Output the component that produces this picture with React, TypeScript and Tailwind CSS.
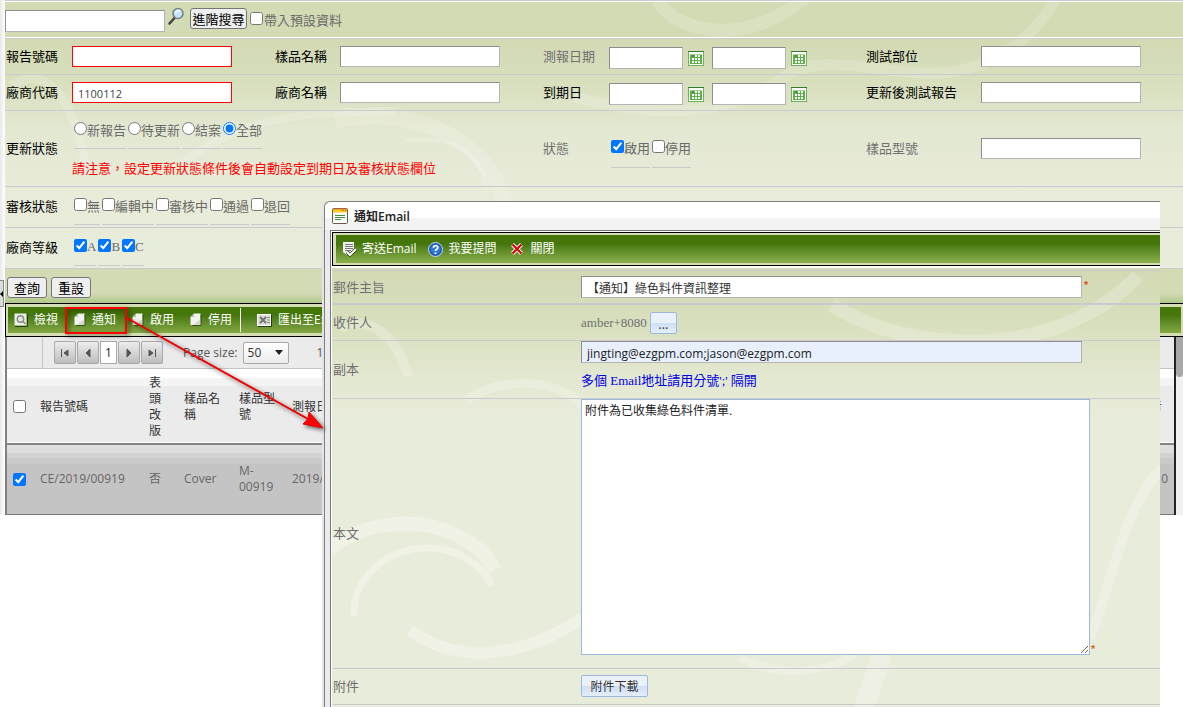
import React, { useState } from 'react';
import type { ReactNode } from 'react';

const uiFont = "font-['Open_Sans','Noto_Sans_CJK_TC',sans-serif]";
const serifFont = "font-['Liberation_Serif','Noto_Sans_CJK_TC',serif]";
const fieldBorder = 'border border-t-[#8e8e8e] border-l-[#8e8e8e] border-r-[#b5b5b5] border-b-[#b5b5b5]';

function TextField({ label, required = false, value = '' }: { label: string; required?: boolean; value?: string }) {
  const [text, setText] = useState(value);
  return (
    <input
      type="text"
      aria-label={label}
      value={text}
      onChange={(e) => setText(e.target.value)}
      className={`h-[21px] w-40 bg-white px-[5px] pt-[2px] text-[11px] text-[#444] ${uiFont} ${required ? 'border border-[#f00]' : fieldBorder}`}
    />
  );
}

function CalendarIcon() {
  return (
    <svg width="16" height="15" viewBox="0 0 16 15" shapeRendering="crispEdges">
      <rect width="16" height="15" fill="#6db35c" />
      <rect width="16" height="1" fill="#2f7d2a" />
      <rect x="1" y="1" width="14" height="13" fill="#fff" />
      <rect x="2" y="3" width="12" height="10" fill="#5fae4c" />
      <rect x="2" y="3" width="12" height="1" fill="#a5d690" />
      <rect x="4" y="4" width="2" height="2" fill="#3f8f35" />
      <g fill="#fff">
        <rect x="7" y="4" width="2" height="2" />
        <rect x="10" y="4" width="2" height="2" />
        <rect x="4" y="7" width="2" height="2" />
        <rect x="7" y="7" width="2" height="2" />
        <rect x="10" y="7" width="2" height="2" />
        <rect x="4" y="10" width="2" height="2" />
        <rect x="7" y="10" width="2" height="2" />
        <rect x="10" y="10" width="2" height="2" />
      </g>
    </svg>
  );
}

function DateRange({ label }: { label: string }) {
  return (
    <div className="flex items-center gap-[5px] pt-[3px]">
      <input type="text" aria-label={`${label} 起`} className={`h-[22px] w-[74px] bg-white px-1 text-[11px] ${fieldBorder}`} />
      <button type="button" aria-label={`${label} 起 日曆`} className="mr-[3px]">
        <CalendarIcon />
      </button>
      <input type="text" aria-label={`${label} 迄`} className={`h-[22px] w-[74px] bg-white px-1 text-[11px] ${fieldBorder}`} />
      <button type="button" aria-label={`${label} 迄 日曆`}>
        <CalendarIcon />
      </button>
    </div>
  );
}

function Choices({ type, name, options, checked }: { type: 'radio' | 'checkbox'; name: string; options: string[]; checked: string[] }) {
  return (
    <div className="flex gap-[2px] pl-[2px]">
      {options.map((option) => (
        <label key={option} className="flex h-[38px] items-center border-b border-[#c9c9cf] text-[#6a6a6a]">
          <input type={type} name={name} defaultChecked={checked.includes(option)} className="mb-[3px] h-[13px] w-[13px]" />
          {option}
        </label>
      ))}
    </div>
  );
}

function Row({ children, height }: { children: ReactNode; height: string }) {
  return (
    <div className={`grid grid-cols-[66px_203px_65px_203px_66px_257px_115px_1fr] items-center border-b border-[#c9c9cf] pl-px ${height}`}>
      {children}
    </div>
  );
}

function Label({ children, muted = false }: { children: ReactNode; muted?: boolean }) {
  return <span className={`pb-[2px] ${muted ? 'text-[#707070]' : 'text-black'}`}>{children}</span>;
}

function PageSwirls() {
  return (
    <svg className="pointer-events-none absolute inset-0 h-full w-full" fill="none" stroke="#fff" strokeOpacity="0.17">
      <path d="M652 0 C675 34 745 46 803 -6" strokeWidth="13" />
      <path d="M1052 -4 C1025 45 975 76 915 72 S810 52 775 78 S680 125 570 96" strokeWidth="11" />
      <path d="M330 120 C400 104 480 132 500 202" strokeWidth="16" />
      <path d="M400 140 C450 134 476 150 482 190" strokeWidth="4" />
      <path d="M6 85 C34 66 66 80 82 170" strokeWidth="9" />
      <path d="M170 168 C240 110 310 112 390 110" strokeWidth="8" />
    </svg>
  );
}

function WindowSwirls() {
  return (
    <svg className="pointer-events-none absolute inset-0 h-full w-full" fill="none" stroke="#fff" strokeOpacity="0.22">
      <path d="M500 37 C580 88 725 92 806 8" strokeWidth="14" />
      <path d="M-2 281 C30 254 80 250 112 262 C140 272 155 286 163 302" strokeWidth="14" strokeOpacity="0.3" />
      <path d="M22 348 C20 310 55 280 95 280 C130 280 152 300 160 318" strokeWidth="7" strokeOpacity="0.3" />
      <path d="M78 362 C120 394 185 394 250 350" strokeWidth="12" strokeOpacity="0.3" />
      <path d="M134 132 C180 104 235 112 262 150" strokeWidth="9" />
      <path d="M8 60 C36 46 64 66 76 108" strokeWidth="10" />
      <path d="M408 390 C442 408 490 408 522 386" strokeWidth="8" />
      <path d="M550 386 C542 410 538 424 530 445" strokeWidth="20" />
      <path d="M758 370 C776 330 790 240 830 200" strokeWidth="10" />
    </svg>
  );
}

function DocIcon() {
  return (
    <svg width="12" height="14" viewBox="0 0 12 14">
      <path d="M4 0.5 H10.5 V12 H0.5 V4 Z" fill="#f3f3f0" />
      <path d="M4 0.5 V4 H0.5 Z" fill="#b9bfae" />
      <path d="M3 12 H10.5 V6 Z" fill="#d4d6cf" />
      <path d="M11 2 V12.5 H2" fill="none" stroke="#24400a" strokeOpacity="0.7" />
    </svg>
  );
}

function ViewIcon() {
  return (
    <svg width="14" height="14" viewBox="0 0 14 14">
      <rect x="0.5" y="0.5" width="12" height="12" fill="#eceee9" />
      <path d="M13.5 1 V13.5 H1" fill="none" stroke="#24400a" />
      <circle cx="6.5" cy="6" r="3.2" fill="#e4e6e2" stroke="#878b83" strokeWidth="1.4" />
      <path d="M9 8.5 L11.5 11" stroke="#878b83" strokeWidth="1.6" />
    </svg>
  );
}

function ExportIcon() {
  return (
    <svg width="15" height="13" viewBox="0 0 15 13">
      <rect x="0.5" y="0.5" width="13" height="11" fill="#dcdedb" stroke="#fff" />
      <path d="M3 3 L9 9 M9 3 L3 9" stroke="#70756b" strokeWidth="2" />
      <path d="M10 3.5 H13 M10 6 H13 M10 8.5 H13" stroke="#8d9289" />
      <path d="M1 12.5 H14.5 V1" fill="none" stroke="#24400a" />
    </svg>
  );
}

function PagerButton({ label, path }: { label: string; path: ReactNode }) {
  return (
    <button type="button" aria-label={label} className="flex h-[23px] w-[22px] items-center justify-center rounded-[2px] border border-[#a9a9a9] bg-linear-to-b from-[#ededed] to-[#bdbdbd]">
      <svg width="12" height="12" viewBox="0 0 12 12" fill="#555" stroke="#555">
        {path}
      </svg>
    </button>
  );
}

function ResultGrid() {
  const head = 'px-[7px] pt-[2px] text-left align-middle font-normal';
  return (
    <table className={`w-full table-fixed border-b border-[#7a7a7a] text-xs leading-4 ${uiFont}`}>
      <colgroup>
        <col className="w-[26px]" />
        <col className="w-[109px]" />
        <col className="w-[35px]" />
        <col className="w-[55px]" />
        <col className="w-[53px]" />
        <col className="w-[80px]" />
        <col />
      </colgroup>
      <thead>
        <tr className="h-[75px] border-b-2 border-[#858585] bg-[linear-gradient(#fff_0_9px,#f4f4f4_9px_17px,#ebebeb_17px)] text-[#333]">
          <th className="pl-[6px] text-left align-middle">
            <input type="checkbox" aria-label="全選" className="block h-[13px] w-[13px]" />
          </th>
          <th className={head}>報告號碼</th>
          <th className={head}>表頭改版</th>
          <th className={head}>樣品名稱</th>
          <th className={head}>樣品型號</th>
          <th className={head}>測報日期</th>
          <th className="pr-3 text-right font-normal">告</th>
        </tr>
      </thead>
      <tbody>
        <tr className="h-[70px] bg-[linear-gradient(#dedede_0_9px,#d2d2d2_9px_14px,#cacaca_14px_20px,#c4c4c4_20px)] text-[#666]">
          <td className="pl-[6px]">
            <input type="checkbox" aria-label="選取 CE/2019/00919" defaultChecked className="block h-[13px] w-[13px]" />
          </td>
          <td className="px-[7px]">CE/2019/00919</td>
          <td className="px-[7px]">否</td>
          <td className="px-[7px]">Cover</td>
          <td className="px-[7px]">M-00919</td>
          <td className="px-[7px]">2019/</td>
          <td className="pr-[6px] text-right">0</td>
        </tr>
      </tbody>
    </table>
  );
}

function EmailWindow() {
  const [subject, setSubject] = useState('【通知】綠色料件資訊整理');
  const [cc, setCc] = useState('jingting@ezgpm.com;jason@ezgpm.com');
  const [body, setBody] = useState('附件為已收集綠色料件清單.');
  const row = 'grid grid-cols-[248px_1fr] items-center border-[#c9c9cf]';
  const softButton = 'rounded-[2px] border border-[#9db8dc] bg-[linear-gradient(#eaf1fb_0_50%,#cfdff3_50%,#e4eefb)] text-[#333]';

  return (
    <section aria-label="通知Email" className="absolute top-[201px] right-[23px] left-[322px] border-l-2 border-[#e4e4e4]">
      <div className="rounded-tl-md border-t border-l border-[#808080] bg-[#ebebeb]">
        <header className="flex h-7 items-center gap-[6px] rounded-tl-md bg-[linear-gradient(#fff_0_16px,#f3f3f3_16px)] pl-[7px]">
          <svg width="16" height="16" viewBox="0 0 16 16">
            <rect x="0.5" y="0.5" width="15" height="15" rx="1" fill="#fff" stroke="#6b5a4a" />
            <rect x="1" y="1" width="14" height="3.5" fill="#ffc928" />
            <path d="M1 1 H15" stroke="#d07b20" />
            <path d="M10 2.5 H11.5 M13 2.5 H14" stroke="#a85510" />
            <path d="M3 7.5 H13 M3 9.5 H13 M3 11.5 H9" stroke="#3f8f35" />
          </svg>
          <h2 className={`pt-[2px] text-xs font-semibold text-[#222] ${uiFont}`}>通知Email</h2>
        </header>
        <div className="ml-[5px] border-t border-l border-[#777] bg-white pt-px pl-px">
          <div className="border-y border-l border-black bg-[#d5ddb5] py-[2px] pl-[3px]">
            <div className={`flex h-7 items-center bg-linear-to-b from-[#44760a] from-30% to-[#8db04c] pl-[6px] text-xs text-white ${uiFont}`}>
              <button type="button" className="flex items-center gap-[5px]">
                <svg width="15" height="16" viewBox="0 0 15 16">
                  <path d="M1 1 H12 V10 L8 14 H5 L1 11 Z" fill="#f2f2f2" />
                  <path d="M3 3.5 H11 M3 5.5 H11 M3 7.5 H11 M3 9.5 H9" stroke="#777" />
                  <path d="M5 11 L8 14 L14 8" fill="none" stroke="#203a08" strokeWidth="3.4" />
                  <path d="M5 11 L8 14 L14 8" fill="none" stroke="#fff" strokeWidth="2" />
                </svg>
                寄送Email
              </button>
              <button type="button" className="ml-[11px] flex items-center gap-[6px]">
                <svg width="15" height="15" viewBox="0 0 15 15">
                  <circle cx="7.5" cy="7.5" r="7" fill="#1c58b5" stroke="#c8dcf4" />
                  <circle cx="7.5" cy="7.5" r="5" fill="#3179d6" />
                  <path d="M5.4 5.8 C5.4 3 9.8 3 9.8 5.8 C9.8 7.4 7.5 7.2 7.5 9" fill="none" stroke="#fff" strokeWidth="1.7" />
                  <circle cx="7.5" cy="11.2" r="1" fill="#fff" />
                </svg>
                我要提問
              </button>
              <button type="button" className="ml-[14px] flex items-center gap-2">
                <svg width="12" height="12" viewBox="0 0 12 12">
                  <path d="M1.5 1.5 L10.5 10.5 M10.5 1.5 L1.5 10.5" stroke="#fff" strokeWidth="4" />
                  <path d="M1.5 1.5 L10.5 10.5 M10.5 1.5 L1.5 10.5" stroke="#d01010" strokeWidth="2.4" />
                </svg>
                關閉
              </button>
            </div>
          </div>
          <div className="relative mt-[2px] bg-[linear-gradient(#d2d9b3,#d9e0bf_60px,#e3e8d1_110px,#e8ecda_150px)] pl-px text-[13px] text-[#707070]">
            <WindowSwirls />
            <div className="relative">
              <div className="h-[3px] border-b border-[#c9c9cf]" />
              <div className={`${row} h-[34px] border-b-2`}>
                <label htmlFor="subject">郵件主旨</label>
                <div className="flex">
                  <input id="subject" type="text" value={subject} onChange={(e) => setSubject(e.target.value)} className={`h-[22px] w-[501px] bg-white px-[5px] pt-[2px] text-xs text-[#333] ${fieldBorder} ${uiFont}`} />
                  <span className="pl-px text-[#e2491c]">*</span>
                </div>
              </div>
              <div className={`${row} h-9 border-b`}>
                <span className="pb-[2px]">收件人</span>
                <div className="flex items-center gap-[3px]">
                  <span className={serifFont}>amber+8080</span>
                  <button type="button" aria-label="選擇收件人" className={`h-[22px] w-[27px] pt-[2px] text-xs leading-4 ${softButton}`}>
                    ...
                  </button>
                </div>
              </div>
              <div className={`${row} h-[58px] border-b`}>
                <label htmlFor="cc" className="pb-[2px]">副本</label>
                <div className="flex h-full flex-col">
                  <input id="cc" type="text" value={cc} onChange={(e) => setCc(e.target.value)} className={`h-[22px] w-[501px] bg-[#e8f0fe] px-[5px] pt-[2px] text-xs text-[#222] ${fieldBorder} ${uiFont}`} />
                  <p className={`pt-2 text-[#0000e6] ${serifFont}`}>多個 Email地址請用分號';' 隔開</p>
                </div>
              </div>
              <div className={`${row} h-[270px] border-b`}>
                <label htmlFor="body" className="pb-[2px]">本文</label>
                <div className="flex h-full items-start">
                  <textarea id="body" value={body} onChange={(e) => setBody(e.target.value)} className={`h-64 w-[509px] resize border border-[#9fb9dc] bg-white px-[3px] pt-[3px] text-xs text-[#222] ${uiFont}`} />
                  <span className="self-end pb-2 text-[#d0661c]">*</span>
                </div>
              </div>
              <div className={`${row} h-9 border-b`}>
                <span className="pb-[2px]">附件</span>
                <button type="button" className={`mb-[2px] h-[22px] w-[67px] text-xs ${softButton}`}>
                  附件下載
                </button>
              </div>
              <div className="h-[2px]" />
            </div>
          </div>
        </div>
      </div>
    </section>
  );
}

function ArrowMark() {
  return (
    <svg className="pointer-events-none absolute top-[303px] left-[60px] drop-shadow-[2px_2px_2px_rgba(0,0,0,0.6)]" width="270" height="135" viewBox="0 0 270 135">
      <rect x="6" y="5" width="60" height="25" fill="none" stroke="#f00" strokeWidth="2" />
      <path d="M65 14 L248 116" stroke="#f00000" strokeWidth="2" />
      <path d="M263 125 L243 121 L248 116 L249 109 Z" fill="#f00" stroke="#e00000" />
    </svg>
  );
}

export default function App() {
  const grayButton = 'rounded-[3px] border border-[#767676] bg-[#efefef] text-[13px] leading-4 text-black';
  const tool = 'flex items-center gap-[6px]';

  return (
    <div className="relative min-h-screen overflow-hidden bg-white font-['Noto_Sans_CJK_TC','Noto_Sans',sans-serif] text-[13px] leading-5">
      <div className="flex">
        <div className="w-[5px] bg-linear-to-r from-[#e8e8e8] to-white pt-[280px]">
          <button type="button" aria-label="收合" className="flex h-[27px] w-1 items-center border border-l-0 border-[#888] bg-[#dcdcdc]">
            <svg width="4" height="8" viewBox="0 0 4 8">
              <path d="M4 0 V8 L0 4 Z" fill="#000" />
            </svg>
          </button>
        </div>
        <main className="min-w-0 flex-1">
          <div className="relative border-t border-[#c9c9cf] bg-[#d3dbb5] bg-[linear-gradient(#d3dbb5_0_38px,#d2d9b3_38px,#d8dfbd_80px,#e3e8d2_130px,#e7ebd8_185px,#e8ecda)]">
            <PageSwirls />
            <div className="relative">
              <form className="flex h-[37px] items-start border-y border-white pt-2">
                <input type="text" aria-label="搜尋" className={`h-[22px] w-40 bg-white px-1 ${fieldBorder}`} />
                <button type="button" aria-label="搜尋" className="ml-[3px] -mt-[3px]">
                  <svg width="17" height="18" viewBox="0 0 17 18">
                    <path d="M1.5 16.5 L6.5 11" stroke="#444" strokeWidth="2.6" strokeLinecap="round" />
                    <circle cx="10" cy="6.5" r="5" fill="#c5e4fa" stroke="#77808a" strokeWidth="1.6" />
                    <path d="M7.5 6 C8 3.5 11 3 12.5 4" fill="none" stroke="#fff" strokeWidth="1.4" />
                  </svg>
                </button>
                <button type="button" className={`-mt-[2px] ml-[5px] h-[21px] w-[57px] ${grayButton}`}>進階搜尋</button>
                <label className="ml-[3px] flex items-center text-[#6a6a6a]">
                  <input type="checkbox" className="mr-px mb-1 h-[13px] w-[13px]" />
                  帶入預設資料
                </label>
              </form>
              <div className="border-t border-[#c9c9cf]">
                <Row height="h-9">
                  <Label>報告號碼</Label>
                  <TextField label="報告號碼" required />
                  <Label>樣品名稱</Label>
                  <TextField label="樣品名稱" />
                  <Label muted>測報日期</Label>
                  <DateRange label="測報日期" />
                  <Label>測試部位</Label>
                  <TextField label="測試部位" />
                </Row>
                <Row height="h-9">
                  <Label>廠商代碼</Label>
                  <TextField label="廠商代碼" required value="1100112" />
                  <Label>廠商名稱</Label>
                  <TextField label="廠商名稱" />
                  <Label>到期日</Label>
                  <DateRange label="到期日" />
                  <Label>更新後測試報告</Label>
                  <TextField label="更新後測試報告" />
                </Row>
                <Row height="h-[76px]">
                  <Label>更新狀態</Label>
                  <div className="col-span-3 h-full">
                    <Choices type="radio" name="update" options={['新報告', '待更新', '結案', '全部']} checked={['全部']} />
                    <p className="pt-[9px] text-[#f00]">請注意，設定更新狀態條件後會自動設定到期日及審核狀態欄位</p>
                  </div>
                  <Label muted>狀態</Label>
                  <Choices type="checkbox" name="status" options={['啟用', '停用']} checked={['啟用']} />
                  <Label muted>樣品型號</Label>
                  <TextField label="樣品型號" />
                </Row>
                <Row height="h-[41px]">
                  <Label>審核狀態</Label>
                  <div className="col-span-7 h-full">
                    <Choices type="checkbox" name="review" options={['無', '編輯中', '審核中', '通過', '退回']} checked={[]} />
                  </div>
                </Row>
                <Row height="h-[41px]">
                  <Label>廠商等級</Label>
                  <div className={`col-span-7 h-full ${serifFont}`}>
                    <Choices type="checkbox" name="grade" options={['A', 'B', 'C']} checked={['A', 'B', 'C']} />
                  </div>
                </Row>
              </div>
            </div>
          </div>

          <div className="flex h-[34px] items-start gap-1 bg-[linear-gradient(#d3dbb5_0_24px,#b3c98c_33px)] pt-2 pl-[2px]">
            <button type="button" className={`h-[21px] w-10 ${grayButton}`}>查詢</button>
            <button type="button" className={`h-[21px] w-10 ${grayButton}`}>重設</button>
          </div>

          <div className="border-y border-l border-black bg-[#d5ddb5] px-[2px] py-[3px]">
            <div className={`flex h-[26px] items-center gap-4 bg-linear-to-b from-[#44760a] from-30% to-[#84a944] pl-[6px] text-xs whitespace-nowrap text-white ${uiFont}`}>
              <button type="button" className={tool}><ViewIcon />檢視</button>
              <button type="button" className={tool}><DocIcon />通知</button>
              <button type="button" className={tool}><DocIcon />啟用</button>
              <button type="button" className={tool}><DocIcon />停用</button>
              <span className="-ml-2 h-6 border-l border-white" />
              <button type="button" className={tool}><ExportIcon />匯出至Ex</button>
            </div>
          </div>

          <div className="flex">
            <div className="min-w-0 flex-1 border-r-2 border-l-2 border-r-[#222] border-l-[#808080]">
              <div className={`flex h-8 items-center border-b border-[#c4c4c4] bg-[#ebebeb] text-xs text-[#555] ${uiFont}`}>
                <div className="h-full w-9 border-r border-[#c4c4c4]" />
                <div className="flex gap-px pl-[11px]">
                  <PagerButton label="第一頁" path={<path d="M2.5 2 V10 M9 3 L5 6 L9 9 Z" />} />
                  <PagerButton label="上一頁" path={<path d="M8 2 L4 6 L8 10 Z" />} />
                  <button type="button" className="h-[23px] w-[17px] border border-[#a9a9a9] bg-white text-[#222]">1</button>
                  <PagerButton label="下一頁" path={<path d="M4 2 L8 6 L4 10 Z" />} />
                  <PagerButton label="最後頁" path={<path d="M9.5 2 V10 M3 3 L7 6 L3 9 Z" />} />
                </div>
                <label htmlFor="page-size" className="pl-5">Page size:</label>
                <div className="relative ml-[5px]">
                  <select id="page-size" className="h-[22px] w-[46px] appearance-none rounded-[2px] border border-[#a9a9a9] bg-linear-to-b from-white to-[#ececec] pl-1 text-[#333]">
                    <option>50</option>
                  </select>
                  <svg className="pointer-events-none absolute top-2 right-[6px]" width="8" height="5" viewBox="0 0 8 5">
                    <path d="M0 0 H8 L4 5 Z" fill="#222" />
                  </svg>
                </div>
                <span className="pl-7">1</span>
              </div>
              <ResultGrid />
            </div>
            <div className="w-[7px] bg-[#f1f1f1]">
              <div className="h-10 rounded-b-md bg-[#a8a8a8]" />
            </div>
          </div>
        </main>
      </div>
      <EmailWindow />
      <ArrowMark />
    </div>
  );
}
